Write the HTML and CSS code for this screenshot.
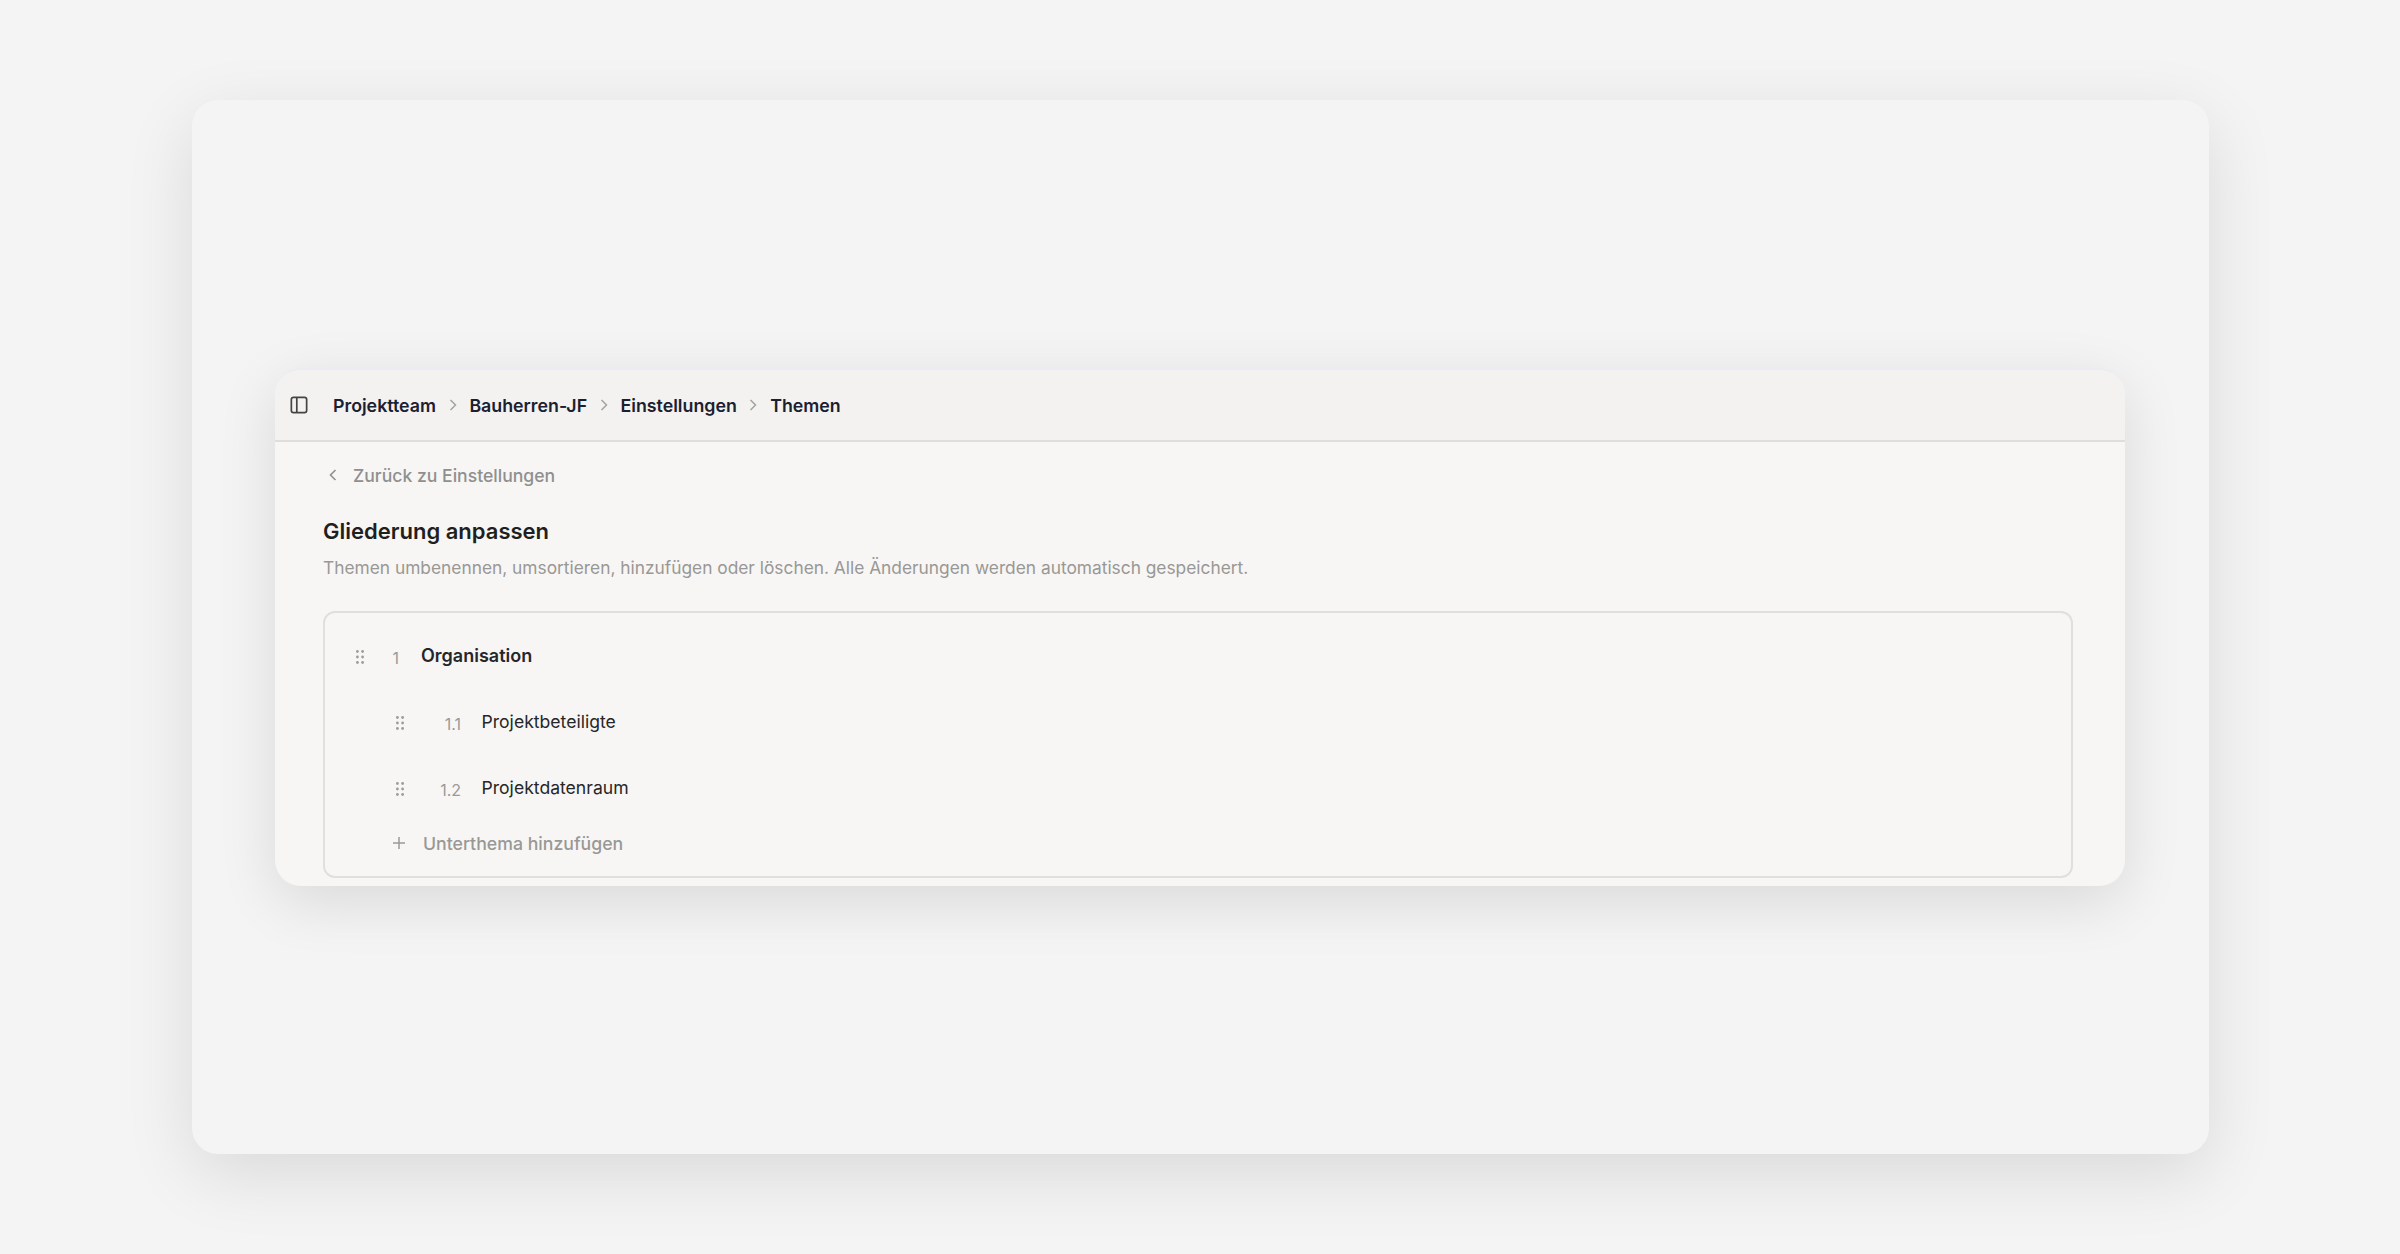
FILE: index.html
```html
<!DOCTYPE html>
<html lang="de">

<head>
    <meta charset="UTF-8">
    <title>Themen</title>
    <link rel="stylesheet" href="styles.css">
</head>

<body>
    <div class="stage">
        <div class="window">
            <header class="topbar">
                <svg class="side-icon" width="18" height="18" viewBox="0 0 18 18" fill="none" stroke="#444444" stroke-width="1.7">
                    <rect x="1.35" y="1.35" width="15.3" height="15.3" rx="2.2"></rect>
                    <path d="M6.8 1.35v15.3"></path>
                </svg>
                <nav class="crumbs">
                    <span>Projektteam</span>
                    <svg class="crumb-sep" width="12" height="14" viewBox="0 0 12 14" fill="none" stroke="#a3a3a3" stroke-width="1.5"><path d="M3.5 2l5 5-5 5"></path></svg>
                    <span>Bauherren-JF</span>
                    <svg class="crumb-sep" width="12" height="14" viewBox="0 0 12 14" fill="none" stroke="#a3a3a3" stroke-width="1.5"><path d="M3.5 2l5 5-5 5"></path></svg>
                    <span>Einstellungen</span>
                    <svg class="crumb-sep" width="12" height="14" viewBox="0 0 12 14" fill="none" stroke="#a3a3a3" stroke-width="1.5"><path d="M3.5 2l5 5-5 5"></path></svg>
                    <span>Themen</span>
                </nav>
            </header>

            <main class="content">
                <a class="back">
                    <svg width="12" height="14" viewBox="0 0 12 14" fill="none" stroke="#8f8f8f" stroke-width="1.6"><path d="M8.5 2l-5 5 5 5"></path></svg>
                    <span>Zurück zu Einstellungen</span>
                </a>
                <h1 class="title">Gliederung anpassen</h1>
                <p class="sub">Themen umbenennen, umsortieren, hinzufügen oder löschen. Alle Änderungen werden automatisch gespeichert.</p>

                <div class="outline">
                    <div class="row row-main">
                        <svg class="grip" width="8" height="14" viewBox="0 0 8 14" fill="#9c9c9c"><circle cx="1.4" cy="1.5" r="1.4"></circle><circle cx="6.6" cy="1.5" r="1.4"></circle><circle cx="1.4" cy="7" r="1.4"></circle><circle cx="6.6" cy="7" r="1.4"></circle><circle cx="1.4" cy="12.5" r="1.4"></circle><circle cx="6.6" cy="12.5" r="1.4"></circle></svg>
                        <span class="num">1</span>
                        <span class="name">Organisation</span>
                    </div>
                    <div class="row row-sub">
                        <svg class="grip" width="8" height="14" viewBox="0 0 8 14" fill="#9c9c9c"><circle cx="1.4" cy="1.5" r="1.4"></circle><circle cx="6.6" cy="1.5" r="1.4"></circle><circle cx="1.4" cy="7" r="1.4"></circle><circle cx="6.6" cy="7" r="1.4"></circle><circle cx="1.4" cy="12.5" r="1.4"></circle><circle cx="6.6" cy="12.5" r="1.4"></circle></svg>
                        <span class="num">1.1</span>
                        <span class="name">Projektbeteiligte</span>
                    </div>
                    <div class="row row-sub">
                        <svg class="grip" width="8" height="14" viewBox="0 0 8 14" fill="#9c9c9c"><circle cx="1.4" cy="1.5" r="1.4"></circle><circle cx="6.6" cy="1.5" r="1.4"></circle><circle cx="1.4" cy="7" r="1.4"></circle><circle cx="6.6" cy="7" r="1.4"></circle><circle cx="1.4" cy="12.5" r="1.4"></circle><circle cx="6.6" cy="12.5" r="1.4"></circle></svg>
                        <span class="num">1.2</span>
                        <span class="name">Projektdatenraum</span>
                    </div>
                    <div class="add">
                        <svg width="14" height="14" viewBox="0 0 14 14" fill="none" stroke="#9a9a9a" stroke-width="1.5"><path d="M7 1v12M1 7h12"></path></svg>
                        <span>Unterthema hinzufügen</span>
                    </div>
                </div>
            </main>
        </div>
    </div>
</body>

</html>
```

FILE: styles.css
```css
* {
    box-sizing: border-box;
}

html,
body {
    height: 100%;
}

body {
    margin: 0;
    background: #f4f4f4;
    font-family: Inter, "Liberation Sans", sans-serif;
    display: flex;
    align-items: center;
    justify-content: center;
    overflow: hidden;
}

.stage {
    width: 2017px;
    height: 1054px;
    border-radius: 26px;
    background: #f4f4f4;
    box-shadow: 0 20px 70px rgba(0, 0, 0, 0.11);
    display: flex;
    align-items: center;
    justify-content: center;
}

.window {
    width: 1850px;
    height: 518px;
    border-radius: 26px;
    background: #f7f6f4;
    border-top: 2px solid #ecebf3;
    box-shadow: 0 16px 60px rgba(0, 0, 0, 0.11);
    overflow: hidden;
}

.topbar {
    height: 72px;
    background: #f3f2f0;
    border-bottom: 2px solid #dfdedb;
    display: flex;
    align-items: center;
    padding-left: 15px;
}

.side-icon {
    margin-right: 25px;
}

.crumbs {
    display: flex;
    align-items: center;
    gap: 10.7px;
    font-size: 17.8px;
    font-weight: 600;
    color: #1b2030;
}

.content {
    padding: 20px 52px 0 48px;
}

.back {
    display: flex;
    align-items: center;
    gap: 14px;
    height: 26px;
    padding-left: 4px;
    font-size: 17.6px;
    font-weight: 500;
    color: #8f8f8f;
}

.title {
    margin: 28px 0 0;
    font-size: 22px;
    line-height: 30px;
    font-weight: 600;
    color: #1f1f1f;
}

.sub {
    margin: 9px 0 0;
    font-size: 17.33px;
    line-height: 26px;
    color: #999896;
}

.outline {
    margin-top: 30px;
    height: 267px;
    border: 2px solid #e0dfdc;
    border-radius: 12px;
    padding-top: 20px;
}

.row {
    display: flex;
    align-items: center;
    height: 44px;
}

.row-sub {
    margin-top: 22px;
}

.grip {
    flex: none;
    margin-top: 4px;
}

.row-main .grip {
    margin-left: 31px;
}

.row-sub .grip {
    margin-left: 71px;
}

.num {
    flex: none;
    text-align: right;
    font-size: 16px;
    margin-top: 6px;
    color: #9a9a9a;
}

.row-main .num {
    width: 35px;
}

.row-sub .num {
    width: 57px;
}

.name {
    font-size: 17.6px;
    color: #26262a;
}

.row-main .name {
    margin-left: 22px;
    font-size: 18px;
    font-weight: 600;
}

.row-sub .name {
    margin-left: 20.5px;
    font-weight: 400;
}

.add {
    display: flex;
    align-items: center;
    gap: 17px;
    margin: 18px 0 0 67px;
    height: 32px;
    font-size: 17.7px;
    font-weight: 500;
    color: #999896;
}
```
